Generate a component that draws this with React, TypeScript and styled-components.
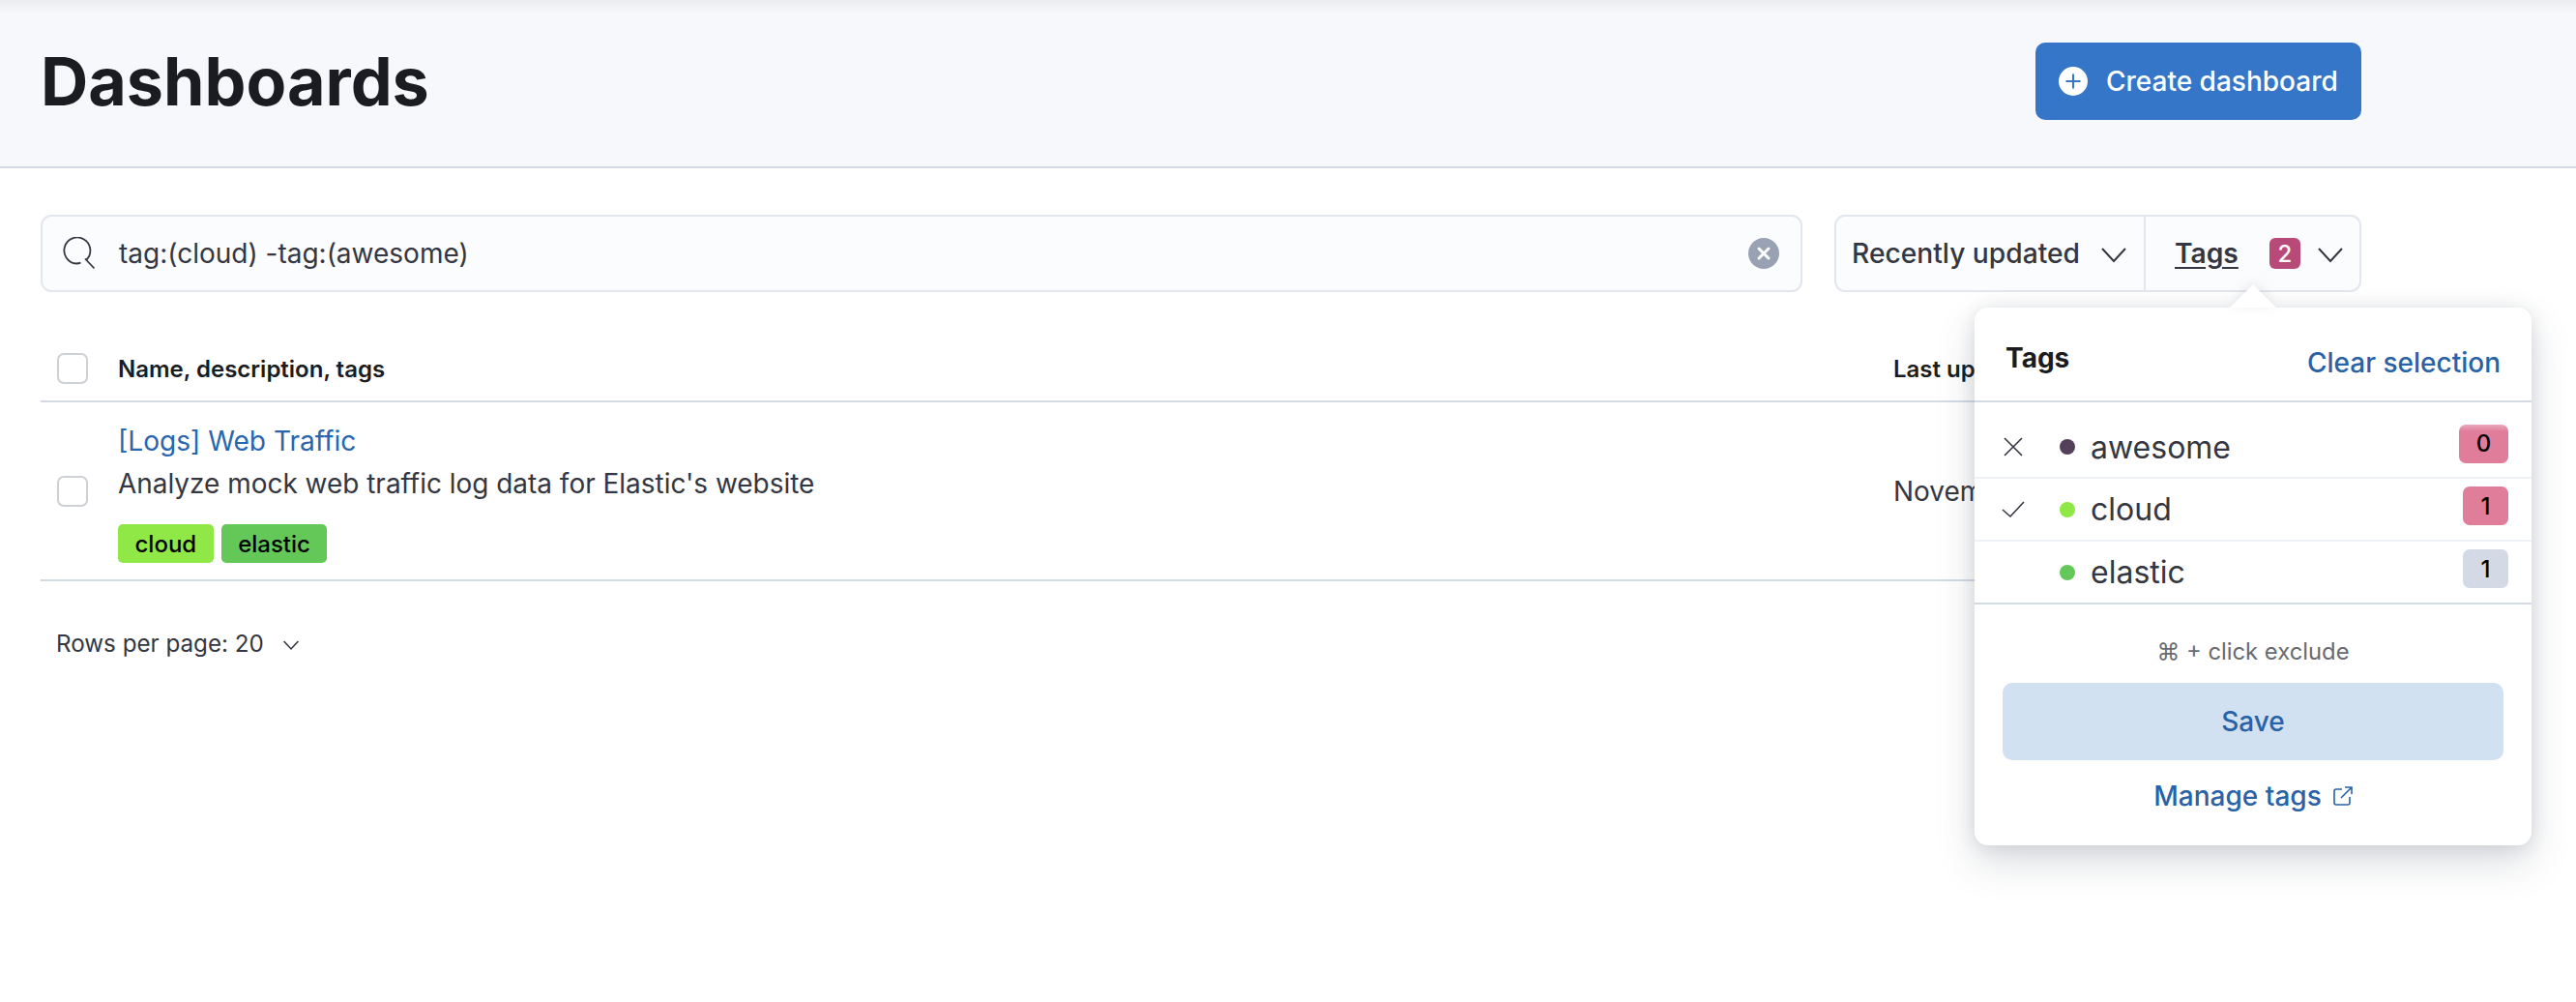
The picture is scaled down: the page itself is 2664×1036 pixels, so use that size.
import React from 'react';
import styled, { createGlobalStyle } from 'styled-components';

const GlobalStyle = createGlobalStyle`
    html, body {
        margin: 0;
        padding: 0;
        background: #fff;
    }
    body {
        font-family: Inter, "Liberation Sans", sans-serif;
        color: #343741;
        overflow: hidden;
    }
`;

const Page = styled.div`
    position: relative;
    width: 2664px;
    height: 1036px;
    overflow: hidden;
    background: #fff;
`;

const Header = styled.header`
    height: 174px;
    box-sizing: border-box;
    padding: 44px 222px 0 42px;
    display: flex;
    justify-content: space-between;
    align-items: flex-start;
    background: linear-gradient(#ebecf0 0, #f7f8fc 14px);
    border-bottom: 2px solid #d3dae6;
`;

const Title = styled.h1`
    margin: 0;
    font-size: 68.2px;
    line-height: 80px;
    font-weight: 700;
    color: #1a1c21;
`;

const PrimaryButton = styled.button`
    width: 337px;
    height: 80px;
    padding: 0 0 0 24px;
    display: flex;
    align-items: center;
    gap: 19px;
    border: none;
    border-radius: 10px;
    background: #3576c9;
    color: #fff;
    font: 500 28px Inter, sans-serif;
`;

const Main = styled.main`
    padding: 48px 222px 0 42px;
`;

const SearchRow = styled.div`
    display: flex;
    gap: 33px;
`;

const SearchBox = styled.div`
    flex: 1;
    height: 80px;
    box-sizing: border-box;
    padding: 0 22px 0 21px;
    display: flex;
    align-items: center;
    background: #fbfcfd;
    border: 2px solid #e3e6ef;
    border-radius: 11px;
`;

const SearchText = styled.span`
    flex: 1;
    margin-left: 24px;
    font-size: 28px;
    color: #343741;
`;

const FilterGroup = styled.div`
    width: 545px;
    height: 80px;
    box-sizing: border-box;
    display: flex;
    background: #fbfcfd;
    border: 2px solid #e3e6ef;
    border-radius: 11px;
`;

const FilterButton = styled.div<{ $width: number; $left: number; $gap: number }>`
    width: ${(p) => p.$width}px;
    box-sizing: border-box;
    padding-left: ${(p) => p.$left}px;
    display: flex;
    align-items: center;
    gap: ${(p) => p.$gap}px;
    font-size: 28.2px;
    font-weight: 500;
    color: #343741;
    & + & {
        border-left: 2px solid #e3e6ef;
    }
`;

const FilterLabel = styled.span`
    font-weight: 600;
    text-decoration: underline;
    text-underline-offset: 4px;
`;

const CountBadge = styled.span`
    width: 32px;
    height: 32px;
    margin-left: 14px;
    display: flex;
    align-items: center;
    justify-content: center;
    border-radius: 6px;
    background: #b84a7a;
    color: #fff;
    font-size: 24px;
    font-weight: 500;
`;

const Table = styled.div`
    margin-top: 32px;
`;

const HeadRow = styled.div`
    height: 82px;
    box-sizing: border-box;
    display: grid;
    grid-template-columns: 80px 1836px 1fr;
    align-items: center;
    border-bottom: 2px solid #d3dae6;
    padding-top: 14px;
    font-size: 24px;
    font-weight: 600;
    color: #1a1c21;
`;

const BodyRow = styled.div`
    height: 185px;
    box-sizing: border-box;
    display: grid;
    grid-template-columns: 80px 1836px 1fr;
    align-items: center;
    border-bottom: 2px solid #d3dae6;
`;

const CheckCell = styled.div`
    padding-left: 17px;
    display: flex;
`;

const Checkbox = styled.span`
    width: 32px;
    height: 32px;
    box-sizing: border-box;
    border: 2px solid #cdd0d5;
    border-radius: 7px;
    background: #fff;
`;

const NameCell = styled.div`
    padding-top: 6px;
    display: flex;
    flex-direction: column;
    align-items: flex-start;
`;

const RowLink = styled.a`
    font-size: 28.1px;
    line-height: 34px;
    color: #2a66b0;
`;

const Description = styled.div`
    margin-top: 10px;
    font-size: 27.95px;
    line-height: 34px;
    color: #343741;
`;

const TagList = styled.div`
    margin-top: 25px;
    display: flex;
    gap: 8px;
`;

const Tag = styled.span<{ $bg: string }>`
    height: 40px;
    padding: 0 17.5px;
    display: flex;
    align-items: center;
    border-radius: 5px;
    background: ${(p) => p.$bg};
    color: #000;
    font-size: 24px;
    font-weight: 500;
`;

const DateCell = styled.div`
    font-size: 28px;
    white-space: nowrap;
`;

const Pager = styled.div`
    margin-top: 50px;
    padding-left: 16px;
    display: flex;
    align-items: center;
    gap: 20px;
    font-size: 24.2px;
    line-height: 30px;
    color: #343741;
`;

const Popover = styled.section`
    position: absolute;
    left: 2042px;
    top: 318px;
    width: 576px;
    height: 556px;
    background: #fff;
    border-radius: 14px;
    box-shadow: 0 18px 40px rgba(60, 70, 90, 0.18), 0 2px 18px rgba(60, 70, 90, 0.14);
    &::before {
        content: '';
        position: absolute;
        left: 264px;
        top: -24px;
        border-left: 24px solid transparent;
        border-right: 24px solid transparent;
        border-bottom: 24px solid #fff;
        filter: drop-shadow(0 -2px 6px rgba(60, 70, 90, 0.12));
    }
`;

const PopoverHead = styled.div`
    height: 98px;
    box-sizing: border-box;
    padding: 14px 32px 0 32px;
    display: flex;
    justify-content: space-between;
    align-items: center;
    border-bottom: 2px solid #d3dae6;
`;

const PopoverTitle = styled.h3`
    margin: 0 0 6px;
    font-size: 28px;
    font-weight: 700;
    color: #1a1c21;
`;

const ClearLink = styled.a`
    margin-top: 3px;
    font-size: 28px;
    font-weight: 500;
    color: #2a62a8;
`;

const TagOptions = styled.div`
    padding-top: 15px;
    border-bottom: 2px solid #d3dae6;
`;

const TagOption = styled.div`
    height: 65px;
    box-sizing: border-box;
    display: flex;
    align-items: center;
    padding: 0 24px 0 28px;
    &:first-child {
        height: 62px;
    }
    & + & {
        border-top: 2px solid #eef2f7;
    }
`;

const MarkSlot = styled.span`
    width: 24px;
    height: 24px;
    margin-right: 36px;
    display: flex;
    align-items: center;
    justify-content: center;
`;

const Dot = styled.span<{ $color: string }>`
    width: 16px;
    height: 16px;
    border-radius: 50%;
    background: ${(p) => p.$color};
`;

const OptionLabel = styled.span`
    flex: 1;
    margin-left: 16px;
    font-size: 32px;
    color: #343741;
`;

const OptionCount = styled.span<{ $bg: string; $wide?: boolean }>`
    width: ${(p) => (p.$wide ? 51 : 47)}px;
    height: 40px;
    margin-bottom: 7px;
    display: flex;
    align-items: center;
    justify-content: center;
    border-radius: 7px;
    background: ${(p) => (p.$wide ? `linear-gradient(#eaa9bc 0, ${p.$bg} 7px)` : p.$bg)};
    color: #000;
    font-size: 24px;
    font-weight: 500;
`;

const PopoverFoot = styled.div`
    padding: 32px 29px 0;
    display: flex;
    flex-direction: column;
    align-items: center;
`;

const Hint = styled.div`
    font-size: 23.8px;
    line-height: 34px;
    color: #696b70;
`;

const SaveButton = styled.button`
    width: 100%;
    height: 80px;
    margin-top: 15px;
    border: none;
    border-radius: 10px;
    background: #d1e1f1;
    color: #2a62a8;
    font: 500 28px Inter, sans-serif;
`;

const ManageLink = styled.a`
    margin-top: 20px;
    display: flex;
    align-items: center;
    gap: 12px;
    font-size: 28px;
    line-height: 34px;
    font-weight: 500;
    color: #2a62a8;
`;

const Chevron = ({ size = 26 }: { size?: number }) => (
    <svg width={size} height={size} viewBox="0 0 26 26" fill="none" stroke="#343741" strokeWidth={size < 20 ? 2.6 : 2}>
        <path d="M1 8l12 13L25 8" />
    </svg>
);

const SearchIcon = () => (
    <svg width="34" height="34" viewBox="0 0 34 34" fill="none" stroke="#343741" strokeWidth="1.8">
        <path d="M24.5 23.5A13.5 13.5 0 1 0 14 27.5c1.5 0 3-.2 4.4-.8" />
        <path d="M23 22.5l9.5 10" />
    </svg>
);

const ClearIcon = () => (
    <svg width="32" height="32" viewBox="0 0 32 32">
        <circle cx="16" cy="16" r="16" fill="#98a2b3" />
        <path d="M11 11l10 10M21 11L11 21" stroke="#fff" strokeWidth="3" strokeLinecap="round" />
    </svg>
);

const PlusIcon = () => (
    <svg width="30" height="30" viewBox="0 0 30 30">
        <circle cx="15" cy="15" r="15" fill="#fff" />
        <path d="M15 7.5v15M7.5 15h15" stroke="#3576c9" strokeWidth="2" />
    </svg>
);

const CrossMark = () => (
    <svg width="20" height="20" viewBox="0 0 20 20" fill="none" stroke="#343741" strokeWidth="1.6">
        <path d="M1 1l18 18M19 1L1 19" />
    </svg>
);

const CheckMark = () => (
    <svg width="24" height="18" viewBox="0 0 24 18" fill="none" stroke="#343741" strokeWidth="1.6">
        <path d="M1 9l8 7L23 1" />
    </svg>
);

const ExternalIcon = () => (
    <svg width="20" height="20" viewBox="0 0 20 20" fill="none" stroke="#2a62a8" strokeWidth="1.6">
        <path d="M9 3H3a2 2 0 0 0-2 2v12a2 2 0 0 0 2 2h12a2 2 0 0 0 2-2v-6" />
        <path d="M8 12L19 1M12 1h7v7" />
    </svg>
);

export default function App() {
    return (
        <Page>
            <GlobalStyle />
            <Header>
                <Title>Dashboards</Title>
                <PrimaryButton>
                    <PlusIcon />
                    Create dashboard
                </PrimaryButton>
            </Header>
            <Main>
                <SearchRow>
                    <SearchBox>
                        <SearchIcon />
                        <SearchText>tag:(cloud) -tag:(awesome)</SearchText>
                        <ClearIcon />
                    </SearchBox>
                    <FilterGroup>
                        <FilterButton $width={318} $left={16} $gap={22}>
                            Recently updated
                            <Chevron />
                        </FilterButton>
                        <FilterButton $width={223} $left={30} $gap={18}>
                            <FilterLabel>Tags</FilterLabel>
                            <CountBadge>2</CountBadge>
                            <Chevron />
                        </FilterButton>
                    </FilterGroup>
                </SearchRow>
                <Table>
                    <HeadRow>
                        <CheckCell>
                            <Checkbox />
                        </CheckCell>
                        <div>Name, description, tags</div>
                        <div>Last updated</div>
                    </HeadRow>
                    <BodyRow>
                        <CheckCell>
                            <Checkbox />
                        </CheckCell>
                        <NameCell>
                            <RowLink>[Logs] Web Traffic</RowLink>
                            <Description>Analyze mock web traffic log data for Elastic's website</Description>
                            <TagList>
                                <Tag $bg="#8fe845">cloud</Tag>
                                <Tag $bg="#64c858">elastic</Tag>
                            </TagList>
                        </NameCell>
                        <DateCell>November</DateCell>
                    </BodyRow>
                </Table>
                <Pager>
                    Rows per page: 20
                    <Chevron size={16} />
                </Pager>
            </Main>
            <Popover>
                <PopoverHead>
                    <PopoverTitle>Tags</PopoverTitle>
                    <ClearLink>Clear selection</ClearLink>
                </PopoverHead>
                <TagOptions>
                    <TagOption>
                        <MarkSlot>
                            <CrossMark />
                        </MarkSlot>
                        <Dot $color="#54405a" />
                        <OptionLabel>awesome</OptionLabel>
                        <OptionCount $bg="#e07d9a" $wide>
                            0
                        </OptionCount>
                    </TagOption>
                    <TagOption>
                        <MarkSlot>
                            <CheckMark />
                        </MarkSlot>
                        <Dot $color="#8fe845" />
                        <OptionLabel>cloud</OptionLabel>
                        <OptionCount $bg="#e07d9a">1</OptionCount>
                    </TagOption>
                    <TagOption>
                        <MarkSlot />
                        <Dot $color="#64c858" />
                        <OptionLabel>elastic</OptionLabel>
                        <OptionCount $bg="#d3dae6">1</OptionCount>
                    </TagOption>
                </TagOptions>
                <PopoverFoot>
                    <Hint>⌘ + click exclude</Hint>
                    <SaveButton>Save</SaveButton>
                    <ManageLink>
                        Manage tags
                        <ExternalIcon />
                    </ManageLink>
                </PopoverFoot>
            </Popover>
        </Page>
    );
}
